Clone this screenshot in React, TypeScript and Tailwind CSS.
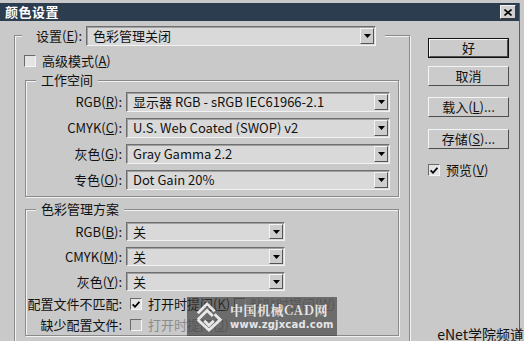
import React from "react";

function ArrowBtn() {
  return (
    <div className="my-[1px] mr-[1px] flex w-[14px] shrink-0 items-center justify-center border border-t-[#f4f4f4] border-l-[#f4f4f4] border-r-[#555555] border-b-[#555555] bg-[#cdcdcd]">
      <svg width="7" height="4" viewBox="0 0 7 4">
        <path d="M0 0h7L3.5 4z" fill="#000" />
      </svg>
    </div>
  );
}

function Select({ value, className }: { value: string; className: string }) {
  return (
    <div
      className={`flex border border-t-[#6e6e6e] border-l-[#6e6e6e] border-b-[#f2f2f2] border-r-[#f2f2f2] bg-[#d9d9d9] shadow-[inset_1px_1px_0_#a0a0a0] ${className}`}
    >
      <div className="flex flex-1 items-center overflow-hidden whitespace-nowrap pl-[6px] text-[13px] leading-[16px] text-[#111]">
        {value}
      </div>
      <ArrowBtn />
    </div>
  );
}

function Check({ checked, disabled }: { checked?: boolean; disabled?: boolean }) {
  return (
    <div
      className={`flex h-[12px] w-[12px] shrink-0 items-center justify-center border border-t-[#6a6a6a] border-l-[#6a6a6a] border-b-[#f4f4f4] border-r-[#f4f4f4] ${
        disabled ? "bg-[#c9c9c9]" : "bg-[#e4e4e4]"
      }`}
    >
      {checked && (
        <svg width="8" height="7" viewBox="0 0 8 7">
          <path d="M0.6 3.4L3 5.8L7.4 0.8" stroke="#000" strokeWidth="1.7" fill="none" />
        </svg>
      )}
    </div>
  );
}

function Btn({ children, def }: { children: React.ReactNode; def?: boolean }) {
  const inner = (
    <div className="flex h-full items-center justify-center border border-t-[#f4f4f4] border-l-[#f4f4f4] border-b-[#4e4e4e] border-r-[#4e4e4e] bg-[#cbcbcb] text-[13px] leading-[16px] text-[#111]">
      {children}
    </div>
  );
  if (def) {
    return <div className="h-[20px] w-[81px] border border-[#111]">{inner}</div>;
  }
  return <div className="h-[20px] w-[81px]">{inner}</div>;
}

function Legend({ children }: { children: React.ReactNode }) {
  return (
    <div className="ml-[10px] mt-[-9px] w-fit bg-[#c9c9c9] px-[5px] text-[13px] leading-[16px] text-[#111]">
      {children}
    </div>
  );
}

function Row({ label, children, className }: { label: React.ReactNode; children: React.ReactNode; className: string }) {
  return (
    <div className={`flex items-center ${className}`}>
      <div className="w-[96px] whitespace-nowrap text-right text-[13px] leading-[16px] text-[#111]">{label}</div>
      <div className="ml-[4px]">{children}</div>
    </div>
  );
}

const groupBox =
  "border border-[#8a8a8a] shadow-[inset_1px_1px_0_#f2f2f2,1px_1px_0_#f2f2f2]";

export default function App() {
  return (
    <div className="relative h-[341px] w-[524px] overflow-hidden bg-[#c9c9c9] font-['Noto_Sans_CJK_SC',sans-serif]">
      <div className="h-full w-[520px] border-r border-[#5e5e5e]">
        {/* title bar */}
        <div className="mt-[3px] flex h-[18px] items-center bg-[#2c3d50] pl-[5px] pr-[3px]">
          <div className="flex-1 text-[13px] font-bold leading-[16px] tracking-[0.5px] text-white">颜色设置</div>
          <div className="flex h-[14px] w-[16px] items-center justify-center border border-t-[#f4f4f4] border-l-[#f4f4f4] border-b-[#3a3a3a] border-r-[#3a3a3a] bg-[#d0d0d0]">
            <svg width="8" height="7" viewBox="0 0 8 7">
              <path d="M0.5 0.5L7.5 6.5M7.5 0.5L0.5 6.5" stroke="#000" strokeWidth="1.6" />
            </svg>
          </div>
        </div>

        {/* body */}
        <div className="flex">
          <div className="w-[410px] pl-[14px]">
            <div className={`mt-[14px] w-[396px] pb-[10px] ${groupBox}`}>
              {/* legend: settings */}
              <div className="ml-[7px] mt-[-10px] flex h-[20px] w-fit items-center bg-[#c9c9c9] pl-[14px] pr-[9px]">
                <div className="text-[13px] leading-[16px] text-[#111]">
                  设置(<u>E</u>):
                </div>
                <Select value="色彩管理关闭" className="ml-[4px] h-[20px] w-[290px]" />
              </div>

              {/* advanced */}
              <div className="ml-[9px] mt-[6px] flex h-[18px] items-center">
                <Check />
                <div className="ml-[6px] text-[13px] leading-[16px] text-[#111]">
                  高级模式(<u>A</u>)
                </div>
              </div>

              {/* working spaces */}
              <div className={`ml-[10px] mt-[10px] w-[374px] pb-[6px] ${groupBox}`}>
                <Legend>工作空间</Legend>
                <Row className="mt-[4px]" label={<>RGB(<u>R</u>):</>}>
                  <Select value="显示器 RGB - sRGB IEC61966-2.1" className="h-[20px] w-[264px]" />
                </Row>
                <Row className="mt-[6px]" label={<>CMYK(<u>C</u>):</>}>
                  <Select value="U.S. Web Coated (SWOP) v2" className="h-[20px] w-[264px]" />
                </Row>
                <Row className="mt-[6px]" label={<>灰色(<u>G</u>):</>}>
                  <Select value="Gray Gamma 2.2" className="h-[20px] w-[264px]" />
                </Row>
                <Row className="mt-[6px]" label={<>专色(<u>O</u>):</>}>
                  <Select value="Dot Gain 20%" className="h-[20px] w-[264px]" />
                </Row>
              </div>

              {/* color management policies */}
              <div className={`ml-[10px] mt-[12px] w-[374px] pb-[1px] ${groupBox}`}>
                <Legend>色彩管理方案</Legend>
                <Row className="mt-[5px]" label={<>RGB(<u>B</u>):</>}>
                  <Select value="关" className="h-[19px] w-[159px]" />
                </Row>
                <Row className="mt-[6px]" label={<>CMYK(<u>M</u>):</>}>
                  <Select value="关" className="h-[19px] w-[159px]" />
                </Row>
                <Row className="mt-[6px]" label={<>灰色(<u>Y</u>):</>}>
                  <Select value="关" className="h-[19px] w-[159px]" />
                </Row>
                <div className="mt-[4px] flex h-[18px] items-center">
                  <div className="w-[96px] whitespace-nowrap text-right text-[13px] leading-[16px] text-[#111]">配置文件不匹配:</div>
                  <div className="ml-[8px] flex w-[104px] items-center">
                    <Check checked />
                    <div className="ml-[6px] whitespace-nowrap text-[13px] leading-[16px] text-[#111]">
                      打开时提问(<u>K</u>)
                    </div>
                  </div>
                  <div className="flex items-center">
                    <Check disabled />
                    <div className="ml-[4px] whitespace-nowrap text-[13px] leading-[16px] text-[#8c8c8c]">
                      粘贴时提问(<u>W</u>)
                    </div>
                  </div>
                </div>
                <div className="mt-[3px] flex h-[18px] items-center">
                  <div className="w-[96px] whitespace-nowrap text-right text-[13px] leading-[16px] text-[#111]">缺少配置文件:</div>
                  <div className="ml-[8px] flex items-center">
                    <Check disabled />
                    <div className="ml-[6px] whitespace-nowrap text-[13px] leading-[16px] text-[#8c8c8c]">
                      打开时提问(<u>J</u>)
                    </div>
                  </div>
                </div>
              </div>
            </div>
          </div>

          {/* right column */}
          <div className="ml-[18px] mt-[17px] flex w-[81px] flex-col">
            <Btn def>好</Btn>
            <div className="mt-[8px]">
              <Btn>取消</Btn>
            </div>
            <div className="mt-[11px]">
              <Btn>
                载入(<u>L</u>)...
              </Btn>
            </div>
            <div className="mt-[12px]">
              <Btn>
                存储(<u>S</u>)...
              </Btn>
            </div>
            <div className="mt-[13px] flex h-[16px] items-center">
              <Check checked />
              <div className="ml-[6px] text-[13px] leading-[16px] text-[#111]">
                预览(<u>V</u>)
              </div>
            </div>
          </div>
        </div>
      </div>

      {/* watermark overlay */}
      <div className="absolute left-[187px] top-[297px] flex h-[39px] w-[150px] items-center bg-[#3a3a3a]/65">
        <svg width="30" height="32" viewBox="0 0 32 34" className="ml-[7px] shrink-0">
          <g stroke="#e8e8e8" strokeWidth="3" fill="none" strokeLinejoin="miter">
            <path d="M4 13L14 3L22 11" />
            <path d="M4 20L14 10L20 16" />
            <path d="M4 20L16 31L28 20L22 14" />
            <path d="M11 21L16 26L21 21" />
          </g>
        </svg>
        <div className="ml-[6px] flex flex-col">
          <div className="whitespace-nowrap font-['Noto_Serif_CJK_SC','Noto_Sans_CJK_SC',serif] text-[13px] font-bold leading-[16px] tracking-[0.5px] text-[#e6e6e6]">
            中国机械CAD网
          </div>
          <div className="whitespace-nowrap font-['DejaVu_Sans',sans-serif] text-[10px] font-bold leading-[13px] tracking-[0.2px] text-[#e6e6e6]">
            www.zgjxcad.com
          </div>
        </div>
      </div>

      {/* site mark */}
      <div className="absolute bottom-[-2px] right-[0px] whitespace-nowrap text-[14px] leading-[17px] text-[#111]">
        eNet学院频道
      </div>
    </div>
  );
}
